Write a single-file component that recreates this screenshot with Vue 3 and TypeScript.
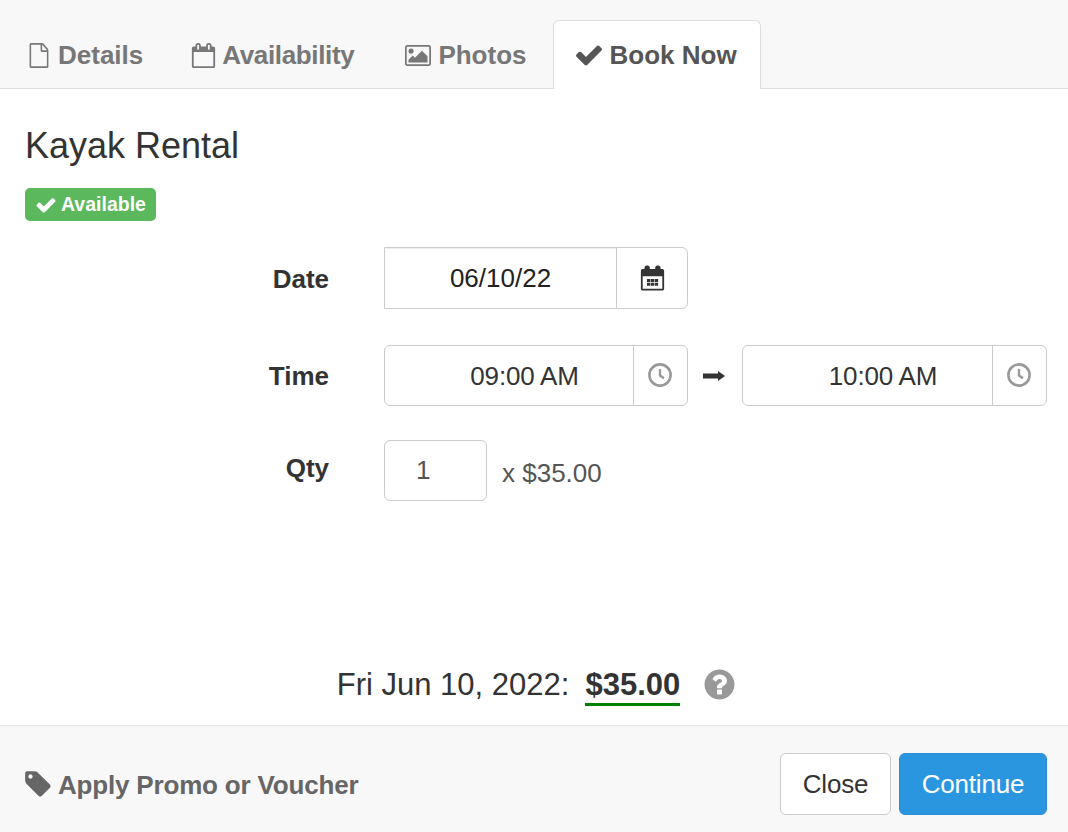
<script setup lang="ts">
const P = {
  check: 'M1671 566q0 40-28 68l-724 724-136 136q-28 28-68 28t-68-28l-136-136-362-362q-28-28-28-68t28-68l136-136q28-28 68-28t68 28l294 295 656-657q28-28 68-28t68 28l136 136q28 28 28 68z',
  file: 'M1596 380q28 28 48 76t20 88v1152q0 40-28 68t-68 28h-1344q-40 0-68-28t-28-68v-1600q0-40 28-68t68-28h896q40 0 88 20t76 48zm-444-244v376h376q-10-29-22-41l-313-313q-12-12-41-22zm384 1528v-1024h-416q-40 0-68-28t-28-68v-416h-768v1536h1280z',
  calO: 'M192 1664h1408v-1024h-1408v1024zm384-1216v-288q0-14-9-23t-23-9h-64q-14 0-23 9t-9 23v288q0 14 9 23t23 9h64q14 0 23-9t9-23zm768 0v-288q0-14-9-23t-23-9h-64q-14 0-23 9t-9 23v288q0 14 9 23t23 9h64q14 0 23-9t9-23zm384-64v1280q0 52-38 90t-90 38h-1408q-52 0-90-38t-38-90v-1280q0-52 38-90t90-38h128v-96q0-66 47-113t113-47h64q66 0 113 47t47 113v96h384v-96q0-66 47-113t113-47h64q66 0 113 47t47 113v96h128q52 0 90 38t38 90z',
  pic: 'M576 576q0 80-56 136t-136 56-136-56-56-136 56-136 136-56 136 56 56 136zm1024 384v448h-1408v-192l320-320 160 160 512-512zm96-704h-1600q-13 0-22.5 9.5t-9.5 22.5v1216q0 13 9.5 22.5t22.5 9.5h1600q13 0 22.5-9.5t9.5-22.5v-1216q0-13-9.5-22.5t-22.5-9.5zm160 32v1216q0 66-47 113t-113 47h-1600q-66 0-113-47t-47-113v-1216q0-66 47-113t113-47h1600q66 0 113 47t47 113z',
  help: 'M1024 1376v-192q0-14-9-23t-23-9h-192q-14 0-23 9t-9 23v192q0 14 9 23t23 9h192q14 0 23-9t9-23zm256-672q0-88-55.5-163t-138.5-116-170-41q-243 0-371 213-15 24 8 42l132 100q7 6 19 6 16 0 25-12 53-68 86-92 34-24 86-24 48 0 85.5 26t37.5 59q0 38-20 61t-68 45q-63 28-115.5 86.5t-52.5 125.5v36q0 14 9 23t23 9h192q14 0 23-9t9-23q0-19 21.5-49.5t54.5-49.5q32-18 49-28.5t46-35 44.5-48 28-60.5 12.5-81zm384 192q0 209-103 385.5t-279.5 279.5-385.5 103-385.5-103-279.5-279.5-103-385.5 103-385.5 279.5-279.5 385.5-103 385.5 103 279.5 279.5 103 385.5z',
  tag: 'M576 448q0-53-37.5-90.5t-90.5-37.5-90.5 37.5-37.5 90.5 37.5 90.5 90.5 37.5 90.5-37.5 37.5-90.5zm1067 576q0 53-37 90l-491 492q-39 37-91 37-53 0-90-37l-715-716q-38-37-64.5-101t-26.5-117v-416q0-52 38-90t90-38h416q53 0 117 26.5t102 64.5l715 714q37 39 37 91z',
  calFill: 'M64 384q0-52 38-90t90-38h128v-96q0-66 47-113t113-47h64q66 0 113 47t47 113v96h384v-96q0-66 47-113t113-47h64q66 0 113 47t47 113v96h128q52 0 90 38t38 90v1280q0 52-38 90t-90 38h-1408q-52 0-90-38t-38-90zm128 384v896h1408v-896zM500 960h240v220h-240zm280 0h240v220h-240zm280 0h240v220h-240zM500 1240h240v220h-240zm280 0h240v220h-240zm280 0h240v220h-240z',
}
const tabs = [
  { label: 'Details', icon: P.file, vb: '0 0 1792 1792', cls: 't-file', par: 'none' },
  { label: 'Availability', icon: P.calO, vb: '0 0 1792 1792', cls: 't-cal', par: 'xMidYMid meet' },
  { label: 'Photos', icon: P.pic, vb: '-64 128 1920 1536', cls: 't-pic', par: 'xMidYMid meet' },
]
</script>

<template>
  <div class="modal">
    <nav class="tabs">
      <a v-for="t in tabs" :key="t.label" class="tab" :class="t.cls">
        <svg :viewBox="t.vb" :preserveAspectRatio="t.par" fill="currentColor"><path :d="t.icon" /></svg>
        <span>{{ t.label }}</span>
      </a>
      <a class="tab active">
        <svg viewBox="0 0 1792 1792" fill="currentColor"><path :d="P.check" /></svg>
        <span>Book Now</span>
      </a>
    </nav>

    <main class="body">
      <h1 class="title">Kayak Rental</h1>
      <span class="badge">
        <svg viewBox="0 0 1792 1792" fill="currentColor"><path :d="P.check" /></svg>
        Available
      </span>

      <div class="form">
        <div class="row row-date">
          <label>Date</label>
          <div class="group g-date">
            <div class="val dark">06/10/22</div>
            <div class="addon">
              <svg class="i-calfill" viewBox="0 0 1792 1792" fill="currentColor"><path fill-rule="evenodd" :d="P.calFill" /></svg>
            </div>
          </div>
        </div>
        <div class="row row-time">
          <label>Time</label>
          <div class="group g-time">
            <div class="val tval">09:00 AM</div>
            <div class="addon a-time">
              <svg class="i-clock" viewBox="0 0 24 24" fill="none" stroke="currentColor"><circle cx="12" cy="12" r="10.6" stroke-width="2.6" /><path d="M12 6v6.6l4 2.6" stroke-width="2.4" /></svg>
            </div>
          </div>
          <svg class="i-arrow" viewBox="0 0 22 10" fill="currentColor"><path d="M0 2.6h15V0l7 5-7 5V7.4H0z" /></svg>
          <div class="group g-time g-end">
            <div class="val tval">10:00 AM</div>
            <div class="addon a-time">
              <svg class="i-clock" viewBox="0 0 24 24" fill="none" stroke="currentColor"><circle cx="12" cy="12" r="10.6" stroke-width="2.6" /><path d="M12 6v6.6l4 2.6" stroke-width="2.4" /></svg>
            </div>
          </div>
        </div>
        <div class="row row-qty">
          <label>Qty</label>
          <div class="qty">1</div>
          <span class="price">x $35.00</span>
        </div>
      </div>

      <div class="summary">
        <span>Fri Jun 10, 2022:</span>
        <strong>$35.00</strong>
        <svg class="i-help" viewBox="0 0 1792 1792" fill="currentColor"><path :d="P.help" /></svg>
      </div>
    </main>

    <footer class="foot">
      <a class="promo">
        <svg viewBox="0 0 1792 1792" fill="currentColor"><path :d="P.tag" /></svg>
        <span>Apply Promo or Voucher</span>
      </a>
      <div class="actions">
        <button class="btn">Close</button>
        <button class="btn primary">Continue</button>
      </div>
    </footer>
  </div>
</template>

<style>
html, body { margin: 0; background: #fff; }
</style>

<style scoped>
.modal {
  width: 1068px;
  height: 832px;
  display: flex;
  flex-direction: column;
  font-family: "Liberation Sans", Arial, sans-serif;
  color: #333;
  overflow: hidden;
}
.tabs {
  height: 88px;
  background: #f8f8f8;
  border-bottom: 1px solid #ddd;
  display: flex;
  align-items: flex-end;
  padding-left: 4px;
  flex: none;
}
.tab {
  box-sizing: border-box;
  padding: 0 23px;
  margin-bottom: -1px;
  height: 69px;
  display: flex;
  align-items: center;
  gap: 6px;
  font-size: 26px;
  font-weight: 700;
  color: #777;
  border: 1px solid transparent;
  border-bottom: none;
  border-radius: 6px 6px 0 0;
}
.tab svg { flex: none; display: block; }
.t-file svg { width: 22px; height: 25px; margin-right: 2px; }
.t-cal svg { width: 25px; height: 25px; }
.t-cal span { letter-spacing: -0.35px; }
.t-pic { margin-left: 3px; }
.t-pic svg { width: 26px; height: 21px; margin-right: 1px; }
.tab.active {
  color: #555;
  background: #fff;
  border-color: #ddd;
  padding: 0 23px 0 20px;
  margin-left: 2px;
}
.tab.active svg { width: 30px; height: 30px; }

.body {
  flex: 1;
  min-height: 0;
  padding: 0 21px 0 25px;
  display: flex;
  flex-direction: column;
  align-items: flex-start;
}
.title {
  margin: 36px 0 0;
  font-size: 36px;
  line-height: 42px;
  font-weight: 400;
}
.badge {
  margin-top: 21px;
  height: 33px;
  box-sizing: border-box;
  padding: 0 10px;
  background: #5cb85c;
  color: #fff;
  border-radius: 5px;
  display: inline-flex;
  align-items: center;
  gap: 4px;
  font-size: 19.5px;
  font-weight: 700;
}
.badge svg { width: 22px; height: 22px; }

.form {
  margin-top: 26px;
  width: 100%;
}
.row {
  display: flex;
  align-items: center;
}
.row label {
  width: 304px;
  margin-right: 55px;
  text-align: right;
  font-size: 26px;
  font-weight: 700;
  flex: none;
}
.row-date label, .row-time label { position: relative; top: 1px; }
.row-time { margin-top: 36px; }
.row-qty { margin-top: 34px; }
.row-qty label { position: relative; top: -2px; }
.group {
  display: flex;
  flex: none;
  box-sizing: border-box;
  border: 1px solid #ccc;
  border-radius: 6px;
}
.g-date { width: 304px; height: 62px; border-radius: 0 6px 6px 0; }
.g-time { width: 304px; height: 61px; border-radius: 6px; }
.g-end { width: 305px; }
.i-arrow { width: 22px; height: 10px; margin: 0 17px 0 15px; flex: none; color: #333; }
.val {
  flex: 1;
  text-align: center;
  font-size: 26px;
  line-height: 60px;
  color: #333;
}
.val.dark {
  color: #222;
  box-shadow: inset 0 1px 1px rgba(0, 0, 0, 0.075);
}
.tval {
  padding-left: 31px;
  letter-spacing: -0.2px;
}
.addon {
  width: 70px;
  flex: none;
  border-left: 1px solid #ccc;
  display: flex;
  align-items: center;
  justify-content: center;
}
.a-time { width: 53px; }
.i-calfill { width: 25px; height: 26px; color: #333; }
.i-clock { width: 24px; height: 24px; margin: 0 2px 2px 0; color: #999; }
.qty {
  width: 103px;
  height: 61px;
  flex: none;
  box-sizing: border-box;
  border: 1px solid #ccc;
  border-radius: 6px;
  padding-left: 31px;
  font-size: 26px;
  line-height: 59px;
  color: #555;
}
.price {
  margin-left: 15px;
  font-size: 26px;
  color: #555;
  position: relative;
  top: 3px;
}
.summary {
  margin-top: auto;
  margin-bottom: 19px;
  align-self: center;
  display: flex;
  align-items: baseline;
  font-size: 31px;
  position: relative;
  left: 1px;
}
.summary strong {
  margin-left: 16px;
  border-bottom: 3px solid #008000;
  font-weight: 700;
  line-height: 36px;
}
.i-help { align-self: center; width: 35px; height: 35px; margin: 0 0 4px 22px; color: #999; }

.foot {
  flex: none;
  height: 107px;
  box-sizing: border-box;
  background: #f8f8f8;
  border-top: 1px solid #e5e5e5;
  display: flex;
  align-items: center;
  justify-content: space-between;
  padding: 10px 21px 0 23px;
}
.promo {
  display: flex;
  align-items: center;
  gap: 5px;
  color: #666;
  font-size: 26px;
  font-weight: 700;
}
.promo span { letter-spacing: -0.18px; position: relative; top: 1px; }
.promo svg { width: 30px; height: 30px; flex: none; }
.actions { display: flex; gap: 8px; }
.btn {
  height: 62px;
  box-sizing: border-box;
  width: 111px;
  font: 400 26px "Liberation Sans", Arial, sans-serif;
  letter-spacing: -0.2px;
  color: #333;
  background: #fff;
  border: 1px solid #ccc;
  border-radius: 6px;
  padding: 0;
}
.btn.primary {
  width: 148px;
  background: #2b96e0;
  border-color: #2b8dd3;
  color: #fff;
}
</style>
